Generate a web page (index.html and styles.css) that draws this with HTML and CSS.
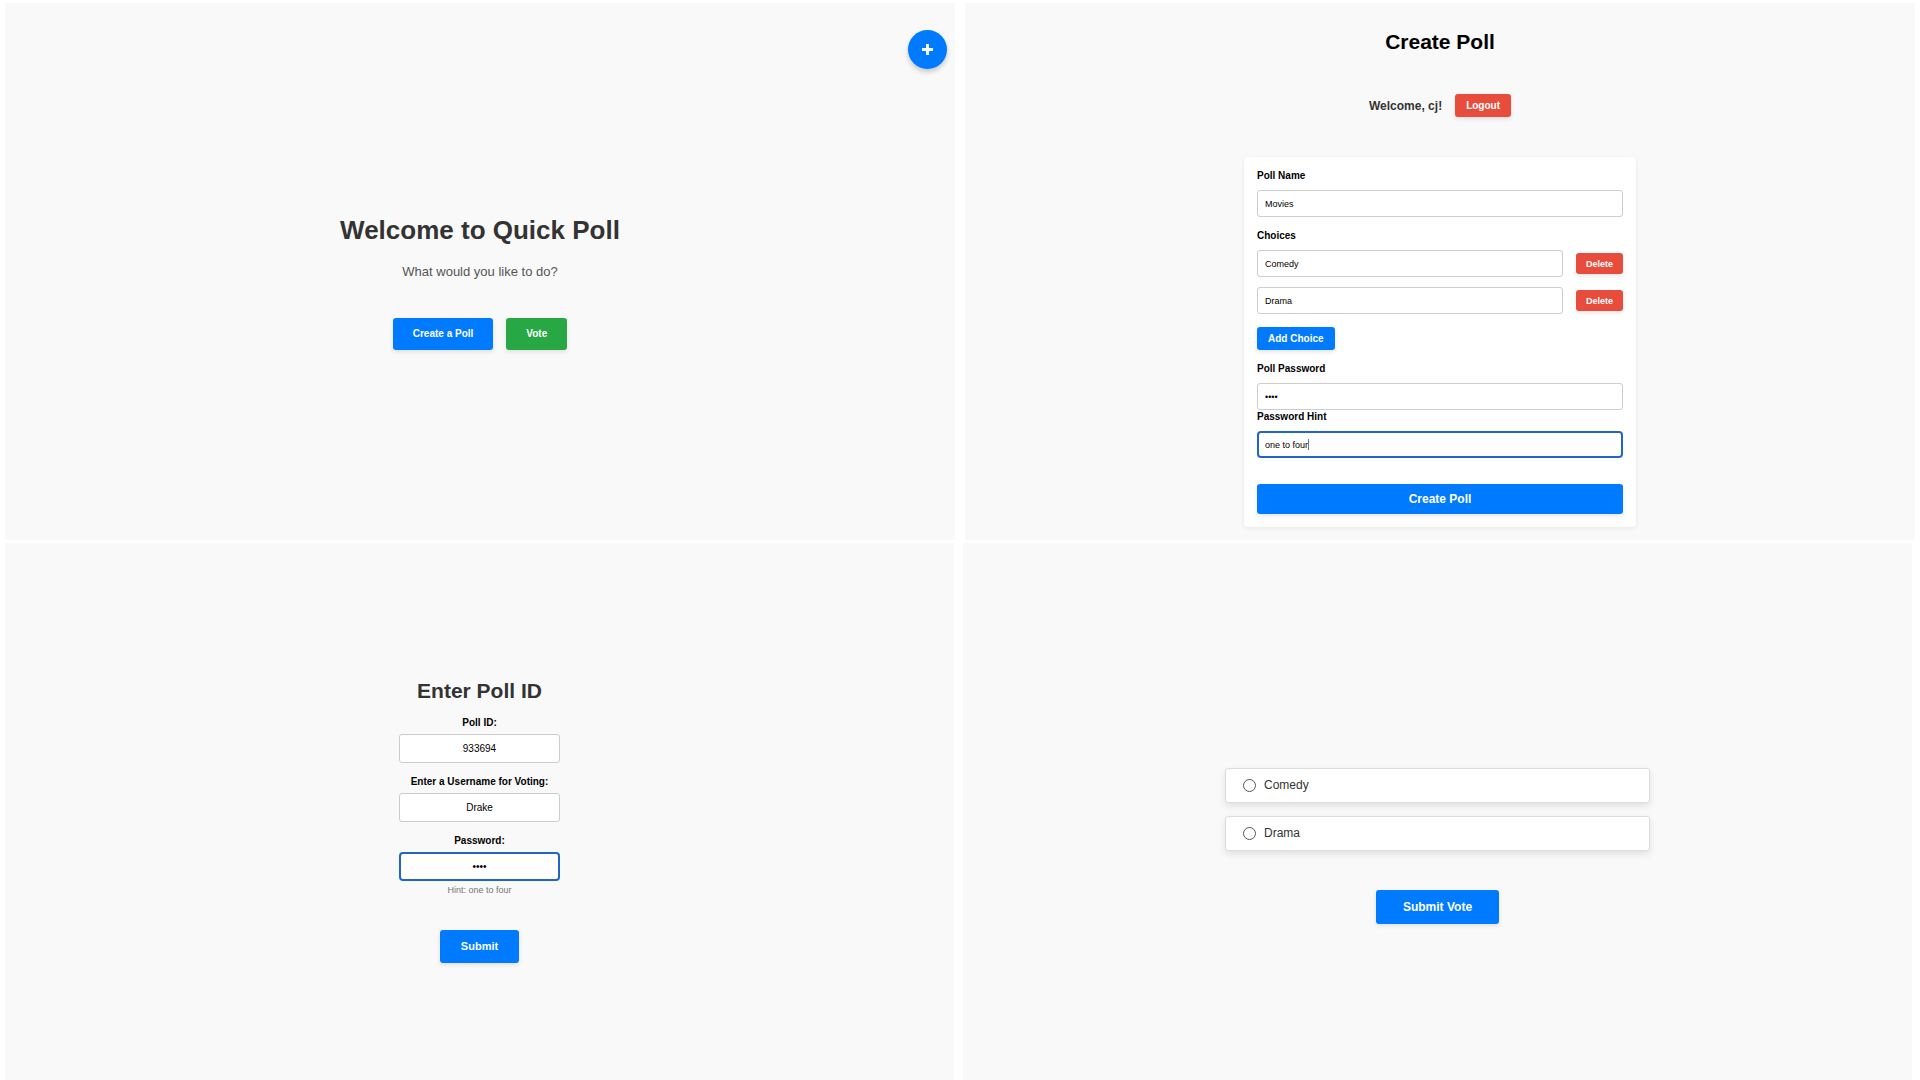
FILE: index.html
```html
<!DOCTYPE html>
<html lang="en">
<head>
<meta charset="utf-8">
<meta name="viewport" content="width=device-width, initial-scale=1">
<title>Quick Poll</title>
<link rel="stylesheet" href="styles.css">
</head>
<body>
<main class="board">
  <div class="row row-top">
    <section class="panel home">
      <button class="fab" type="button" aria-label="New poll">
        <svg width="11" height="11" viewBox="0 0 11 11" aria-hidden="true"><path d="M5.5 0v11M0 5.5h11" stroke="#fff" stroke-width="3" fill="none"/></svg>
      </button>
      <h1 class="home-title">Welcome to Quick Poll</h1>
      <p class="home-lead">What would you like to do?</p>
      <div class="home-actions">
        <button class="btn btn-home" type="button">Create a Poll</button>
        <button class="btn btn-home btn-green" type="button">Vote</button>
      </div>
    </section>

    <section class="panel create">
      <h2 class="create-title">Create Poll</h2>
      <div class="user-bar">
        <span class="user-name">Welcome, cj!</span>
        <button class="btn btn-small btn-red" type="button">Logout</button>
      </div>
      <form class="card">
        <label class="label" for="poll-name">Poll Name</label>
        <input class="input" id="poll-name" type="text" value="Movies">
        <label class="label label-next" for="choice-1">Choices</label>
        <div class="choices">
          <div class="choice">
            <input class="input" id="choice-1" type="text" value="Comedy">
            <button class="btn btn-delete btn-red" type="button">Delete</button>
          </div>
          <div class="choice">
            <input class="input" type="text" aria-label="Choice 2" value="Drama">
            <button class="btn btn-delete btn-red" type="button">Delete</button>
          </div>
        </div>
        <button class="btn btn-small btn-add" type="button">Add Choice</button>
        <label class="label" for="poll-password">Poll Password</label>
        <input class="input" id="poll-password" type="password" value="1234">
        <label class="label" for="poll-hint">Password Hint</label>
        <div class="input-wrap">
          <input class="input input-active" id="poll-hint" type="text" value="one to four">
          <span class="caret"></span>
        </div>
        <button class="btn btn-create" type="button">Create Poll</button>
      </form>
    </section>
  </div>

  <div class="row row-bottom">
    <section class="panel enter">
      <h2 class="enter-title">Enter Poll ID</h2>
      <form class="enter-form">
        <div class="field">
          <label class="field-label" for="poll-id">Poll ID:</label>
          <input class="input input-center" id="poll-id" type="text" value="933694">
        </div>
        <div class="field">
          <label class="field-label" for="username">Enter a Username for Voting:</label>
          <input class="input input-center" id="username" type="text" value="Drake">
        </div>
        <div class="field">
          <label class="field-label" for="password">Password:</label>
          <input class="input input-center input-active" id="password" type="password" value="1234">
          <p class="hint">Hint: one to four</p>
        </div>
        <button class="btn btn-submit" type="button">Submit</button>
      </form>
    </section>

    <section class="panel vote">
      <form class="vote-form">
        <label class="option"><input class="radio" type="radio" name="vote" value="comedy">Comedy</label>
        <label class="option"><input class="radio" type="radio" name="vote" value="drama">Drama</label>
        <button class="btn btn-vote" type="button">Submit Vote</button>
      </form>
    </section>
  </div>
</main>
</body>
</html>
```
FILE: styles.css
```css
* {
  box-sizing: border-box;
}

body {
  margin: 0;
  background: #fff;
  color: #000;
  font-family: "Liberation Sans", Arial, sans-serif;
}

h1, h2, p {
  margin: 0;
}

.board {
  display: grid;
  grid-template-rows: 1fr 1fr;
  gap: 3px;
  min-height: 100vh;
  padding-top: 3px;
}

.row {
  display: grid;
  grid-template-columns: 1fr 1fr;
}

.row-top {
  gap: 10px;
  padding: 0 5px;
}

.row-bottom {
  gap: 9px;
  padding: 0 8px 0 5px;
}

.panel {
  position: relative;
  display: flex;
  flex-direction: column;
  align-items: center;
  justify-content: center;
  background: #f9f9f9;
}

/* Buttons */

.btn {
  border: 0;
  border-radius: 3px;
  background: #007bff;
  color: #fff;
  font-family: inherit;
  font-size: 10px;
  font-weight: bold;
  line-height: 12px;
  box-shadow: 0 2px 4px rgba(0, 0, 0, 0.1);
  cursor: pointer;
}

.btn-green {
  background: #28a745;
}

.btn-red {
  background: #e74c3c;
}

.btn-home {
  padding: 10px 20px;
}

.btn-small {
  height: 23px;
  padding: 0 11px;
}

.btn-delete {
  flex: none;
  padding: 5px 10px 4px;
  font-size: 9px;
}

.btn-create {
  margin-top: 26px;
  padding: 9px;
  font-size: 12px;
}

.btn-submit {
  margin-top: 22px;
  padding: 10px 21px 11px;
  font-size: 11px;
}

.btn-vote {
  margin-top: 26px;
  padding: 11px 27px;
  font-size: 12px;
}

/* Inputs */

.input {
  width: 100%;
  height: 27px;
  padding: 0 7px;
  border: 1px solid #ccc;
  border-radius: 3px;
  background: #fff;
  color: #000;
  font-family: inherit;
  font-size: 9px;
}

.input-center {
  height: 29px;
  font-size: 10px;
  text-align: center;
}

.input-active {
  padding: 0 6px;
  border: 2px solid #1f67c5;
  border-radius: 4px;
  outline: 0;
}

.input-wrap {
  position: relative;
  display: flex;
}

.caret {
  position: absolute;
  top: 8px;
  left: 51px;
  width: 1px;
  height: 11px;
  background: #777;
}

/* Home */

.home {
  padding-top: 22px;
}

.fab {
  position: absolute;
  top: 27px;
  right: 8px;
  display: grid;
  place-items: center;
  width: 39px;
  height: 39px;
  padding: 0;
  border: 0;
  border-radius: 50%;
  background: #007bff;
  box-shadow: 0 3px 5px rgba(0, 0, 0, 0.2);
  cursor: pointer;
}

.home-title {
  color: #333;
  font-size: 26px;
  line-height: 30px;
}

.home-lead {
  margin-top: 19px;
  color: #555;
  font-size: 13px;
  line-height: 16px;
}

.home-actions {
  display: flex;
  gap: 13px;
  margin-top: 38px;
}

/* Create poll */

.create {
  justify-content: flex-start;
  padding: 27px 0 12px;
}

.create-title {
  font-size: 21px;
  line-height: 24px;
}

.user-bar {
  display: flex;
  align-items: center;
  gap: 13px;
  margin: 40px 0;
}

.user-name {
  color: #333;
  font-size: 12px;
  font-weight: bold;
}

.card {
  display: flex;
  flex-direction: column;
  width: 100%;
  max-width: 392px;
  padding: 12px 13px 13px;
  border-radius: 4px;
  background: #fff;
  box-shadow: 0 1px 4px rgba(0, 0, 0, 0.08);
}

.label {
  margin-bottom: 8px;
  font-size: 10px;
  font-weight: bold;
  line-height: 13px;
}

.label-next {
  margin-top: 12px;
}

.choices {
  display: flex;
  flex-direction: column;
  gap: 10px;
}

.choice {
  display: flex;
  align-items: center;
  gap: 13px;
}

.btn-add {
  align-self: flex-start;
  margin: 13px 0 12px;
}

/* Enter poll */

.enter {
  padding-top: 18px;
}

.enter-title {
  margin-bottom: 13px;
  color: #333;
  font-size: 21px;
  line-height: 24px;
}

.enter-form {
  display: flex;
  flex-direction: column;
  align-items: center;
  gap: 12px;
}

.field {
  display: flex;
  flex-direction: column;
  width: 161px;
  text-align: center;
}

.field-label {
  margin-bottom: 5px;
  font-size: 10px;
  font-weight: bold;
  line-height: 13px;
  white-space: nowrap;
}

.hint {
  margin-top: 3px;
  color: #777;
  font-size: 9px;
  line-height: 12px;
}

/* Vote */

.vote {
  padding-top: 68px;
}

.vote-form {
  display: flex;
  flex-direction: column;
  align-items: center;
  gap: 13px;
  width: 100%;
  max-width: 425px;
}

.option {
  display: flex;
  align-items: center;
  gap: 8px;
  width: 100%;
  padding: 9px 17px;
  border: 1px solid #ddd;
  border-radius: 3px;
  background: #fff;
  color: #333;
  font-size: 12px;
  line-height: 15px;
  box-shadow: 0 3px 7px rgba(0, 0, 0, 0.1);
}

.radio {
  appearance: none;
  width: 13px;
  height: 13px;
  margin: 0;
  border: 1px solid #555;
  border-radius: 50%;
  background: #fff;
}

.radio:checked {
  border: 4px solid #007bff;
}
```
